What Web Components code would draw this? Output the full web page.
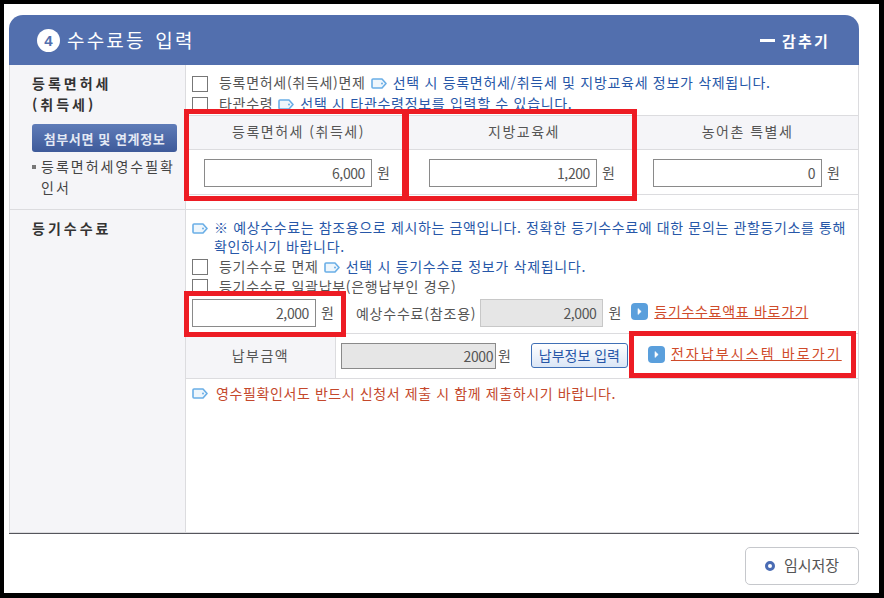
<!DOCTYPE html>
<html lang="ko">
<head>
<meta charset="utf-8">
<title>수수료등 입력</title>
<style>
  html, body { margin: 0; padding: 0; background: #000; }
  body { width: 884px; height: 598px; overflow: hidden; font-family: "Noto Sans CJK KR", "Liberation Sans", sans-serif; }
</style>
</head>
<body>
<fee-form>
  <fee-section slot="a" label="등록면허세<br>(취득세)" height="145" pad="8">
    <div slot="side">
      <side-button>첨부서면 및 연계정보</side-button>
      <side-note>등록면허세영수필확인서</side-note>
    </div>
    <div style="height:8px"></div>
    <check-line h="21" label="등록면허세(취득세)면제" note="선택 시 등록면허세/취득세 및 지방교육세 정보가 삭제됩니다."></check-line>
    <check-line h="21" label="타관수령" note="선택 시 타관수령정보를 입력할 수 있습니다."></check-line>
    <tax-table></tax-table>
  </fee-section>
  <fee-section slot="b" label="등기수수료" height="323" pad="8">
    <reg-fee></reg-fee>
  </fee-section>
</fee-form>

<script>
const TEXT = '"Noto Sans CJK KR", "Liberation Sans", sans-serif';

const tagIcon = `<svg width="16" height="11" viewBox="0 0 16 11" style="flex:none;display:block"><path d="M2 1H11L15 5.5L11 10H2Q1 10 1 9V2Q1 1 2 1Z" fill="#eef6fc" stroke="#6aaee6" stroke-width="1.6" stroke-linejoin="round"/><circle cx="11" cy="5.5" r="1" fill="#6aaee6"/></svg>`;
const goIcon = `<svg width="17" height="17" viewBox="0 0 17 17" style="flex:none;display:block"><rect width="17" height="17" rx="4" fill="#5a9fdc"/><path d="M7 5.5L10.2 8.5L7 11.5Z" fill="#fff" stroke="#fff" stroke-width=".6" stroke-linejoin="round"/></svg>`;

class FeeForm extends HTMLElement {
  connectedCallback() {
    this.attachShadow({ mode: 'open' });
    this.shadowRoot.innerHTML = `
      <style>
        :host { display: block; position: relative; box-sizing: border-box; width: 875px; height: 589px; margin: 4px 0 0 4px; background: #fff; padding: 11px 20px 0 5px; font-family: ${TEXT}; }
        .head { height: 50px; background: #526fae; border-radius: 14px 14px 0 0; display: flex; align-items: center; padding: 0 29px 0 28px; color: #fff; }
        .num { width: 23px; height: 23px; border-radius: 50%; background: #fff; color: #526fae; font: bold 15px "Liberation Sans", sans-serif; display: flex; align-items: center; justify-content: center; }
        .title { font-size: 19px; letter-spacing: 2.2px; word-spacing: 2px; margin: 0 0 2px 7px; flex: 1; }
        .hide { display: flex; align-items: center; font-size: 15px; font-weight: 700; letter-spacing: 2.2px; }
        .hide i { width: 15px; height: 3px; background: #fff; margin-right: 7px; }
        .body { height: 469px; border-bottom: 1px solid #55565c; box-sizing: border-box; }
        .foot { display: flex; justify-content: flex-end; padding-top: 13px; }
        .save { box-sizing: border-box; width: 114px; height: 38px; padding-bottom: 3px; border: 1px solid #c6c8cc; border-radius: 5px; background: #fff; display: flex; align-items: center; justify-content: center; font-size: 15px; color: #555; }
        .save i { width: 4px; height: 4px; border: 3px solid #4a6cb4; border-radius: 50%; margin: 2px 9px 0 0; background: #fff; }
      </style>
      <div class="head">
        <span class="num">4</span><span class="title">수수료등 입력</span>
        <span class="hide"><i></i>감추기</span>
      </div>
      <div class="body"><slot name="a"></slot><slot name="b"></slot></div>
      <div class="foot"><div class="save"><i></i>임시저장</div></div>
      <red-box style="left:180px;top:105px;width:223px;height:92px"></red-box>
      <red-box style="left:400px;top:105px;width:233px;height:92px"></red-box>
      <red-box style="left:180px;top:287px;width:162px;height:46px"></red-box>
      <red-box style="left:625px;top:327px;width:227px;height:47px"></red-box>
    `;
  }
}

class RedBox extends HTMLElement {
  connectedCallback() {
    this.attachShadow({ mode: 'open' });
    this.shadowRoot.innerHTML = `<style>:host { position: absolute; box-sizing: border-box; border: 5px solid #ed1c24; }</style>`;
  }
}

class FeeSection extends HTMLElement {
  connectedCallback() {
    this.attachShadow({ mode: 'open' });
    this.shadowRoot.innerHTML = `
      <style>
        :host { display: flex; box-sizing: border-box; height: ${this.getAttribute('height')}px; border-bottom: 1px solid #dcdcdf; border-left: 1px solid #dcdcdf; border-right: 1px solid #dcdcdf; }
        .side { box-sizing: border-box; width: 176px; flex: none; background: #f5f5f8; border-right: 1px solid #dcdcdf; padding: ${this.getAttribute('pad')}px 0 0 22px; }
        .label { font-size: 14px; font-weight: 700; line-height: 21px; color: #333; letter-spacing: 3px; }
        .main { flex: 1; min-width: 0; }
      </style>
      <div class="side"><div class="label">${this.getAttribute('label')}</div><slot name="side"></slot></div>
      <div class="main"><slot></slot></div>
    `;
  }
}

class SideButton extends HTMLElement {
  connectedCallback() {
    this.attachShadow({ mode: 'open' });
    this.shadowRoot.innerHTML = `
      <style>:host { display: flex; align-items: center; justify-content: center; box-sizing: border-box; width: 145px; height: 28px; margin-top: 9px; border-radius: 3px; background: linear-gradient(#5f7cb8, #3e5a9a); color: #e4e9f4; font-size: 13px; font-weight: 700; letter-spacing: .6px; }</style><slot></slot>`;
  }
}

class SideNote extends HTMLElement {
  connectedCallback() {
    this.attachShadow({ mode: 'open' });
    this.shadowRoot.innerHTML = `
      <style>
        :host { display: flex; width: 150px; margin-top: 4px; font-size: 14px; line-height: 21px; color: #444; letter-spacing: 2px; }
        i { flex: none; width: 4px; height: 4px; background: #777; margin: 9px 5px 0 0; }
        span { width: 140px; }
      </style><i></i><span><slot></slot></span>`;
  }
}

class CheckLine extends HTMLElement {
  connectedCallback() {
    this.attachShadow({ mode: 'open' });
    this.shadowRoot.innerHTML = `
      <style>
        :host { display: flex; align-items: center; height: ${this.getAttribute('h') || 20}px; padding-left: 6px; font-size: 14px; color: #555; white-space: nowrap; overflow: hidden; letter-spacing: .7px; }
        .box { box-sizing: border-box; width: 16px; height: 16px; border: 1px solid #777; margin-right: 11px; flex: none; background: #fff; }
        .t { margin-bottom: 3px; }
        .note { color: #2757a8; margin-left: 6px; }
        .tag { margin-left: 5px; }
      </style>
      <span class="box"></span><span class="t">${this.getAttribute('label')}</span>
      ${this.getAttribute('note') ? `<span class="tag">${tagIcon}</span><span class="t note">${this.getAttribute('note')}</span>` : ''}
    `;
  }
}

class MoneyField extends HTMLElement {
  connectedCallback() {
    this.attachShadow({ mode: 'open' });
    const grey = this.hasAttribute('grey');
    const dark = this.hasAttribute('dark');
    const h = this.getAttribute('h') || 28;
    const pad = this.getAttribute('pad') || 6;
    this.shadowRoot.innerHTML = `
      <style>
        :host { display: flex; align-items: center; font-size: 14px; color: #555; }
        .f { box-sizing: border-box; height: ${h}px; width: ${this.getAttribute('width')}px; border: 1px solid ${grey && !dark ? '#c8c8c8' : '#8a8a8a'}; background: ${grey ? '#e6e6e6' : '#fff'}; line-height: ${h - 2}px; padding-right: ${pad}px; text-align: right; letter-spacing: -.4px; }
        .u { margin: 0 0 2px ${this.getAttribute('gap') || 5}px; }
      </style>
      <div class="f">${this.getAttribute('value')}</div><span class="u">원</span>
    `;
  }
}

class TaxTable extends HTMLElement {
  connectedCallback() {
    this.attachShadow({ mode: 'open' });
    const col = (name, value, w, pad) => `
      <div class="c"><div class="th">${name}</div><div class="td" style="padding-left:${pad}px"><money-field width="${w}" value="${value}"></money-field></div></div>`;
    this.shadowRoot.innerHTML = `
      <style>
        :host { display: grid; grid-template-columns: 225px 226px 1fr; font-size: 14px; color: #555; border-top: 1px solid #dcdcdf; border-bottom: 1px solid #dcdcdf; }
        .th { box-sizing: border-box; height: 34px; padding-bottom: 3px; background: #f5f5f8; border-bottom: 1px solid #dcdcdf; display: flex; align-items: center; justify-content: center; letter-spacing: 1.5px; }
        .td { box-sizing: border-box; height: 44px; padding-top: 2px; display: flex; align-items: center; }
      </style>
      ${col('등록면허세 (취득세)', '6,000', 168, 18)}
      ${col('지방교육세', '1,200', 168, 18)}
      ${col('농어촌 특별세', '0', 169, 16)}
    `;
  }
}

class RegFee extends HTMLElement {
  connectedCallback() {
    this.attachShadow({ mode: 'open' });
    this.shadowRoot.innerHTML = `
      <style>
        :host { display: block; font-size: 14px; color: #555; }
        .notice { display: flex; padding: 8px 0 0 6px; margin-bottom: 1px; color: #2757a8; line-height: 19px; letter-spacing: .63px; white-space: nowrap; }
        .notice svg { margin: 5px 6px 0 0; }
        .row { display: flex; align-items: center; box-sizing: border-box; height: 36px; padding: 0 0 4px 6px; white-space: nowrap; }
        .pay { display: flex; align-items: center; box-sizing: border-box; height: 46px; border-top: 1px solid #dcdcdf; border-bottom: 1px solid #dcdcdf; white-space: nowrap; }
        .pay .lab { box-sizing: border-box; width: 150px; height: 100%; padding-bottom: 3px; background: #f5f5f8; display: flex; align-items: center; justify-content: center; border-right: 1px solid #dcdcdf; letter-spacing: 1.5px; }
        a { color: #cf4a2a; text-decoration: underline; }
        .go { display: flex; align-items: center; }
        .btn { box-sizing: border-box; width: 97px; height: 25px; padding-bottom: 2px; border: 1px solid #3f6fb5; border-radius: 3px; background: linear-gradient(#fff, #dbe6f6); color: #2757a8; display: flex; align-items: center; justify-content: center; font-size: 14px; }
        .red { display: flex; align-items: center; padding: 4px 0 0 6px; color: #c4482c; line-height: 20px; letter-spacing: .6px; white-space: nowrap; }
        .red svg { margin-right: 8px; }
      </style>
      <div class="notice">${tagIcon}<span>※ 예상수수료는 참조용으로 제시하는 금액입니다. 정확한 등기수수료에 대한 문의는 관할등기소를 통해<br>확인하시기 바랍니다.</span></div>
      <check-line label="등기수수료 면제" note="선택 시 등기수수료 정보가 삭제됩니다."></check-line>
      <check-line label="등기수수료 일괄납부(은행납부인 경우)"></check-line>
      <div class="row">
        <money-field width="124" value="2,000"></money-field>
        <span style="margin:0 0 1px 22px;letter-spacing:.8px">예상수수료(참조용)</span>
        <money-field grey width="123" value="2,000" style="margin-left:4px"></money-field>
        <span class="go" style="margin:0 0 3px 10px;gap:6px">${goIcon}<a style="letter-spacing:.7px;margin-bottom:2px">등기수수료액표 바로가기</a></span>
      </div>
      <div class="pay">
        <div class="lab">납부금액</div>
        <money-field grey dark h="26" pad="2" gap="2" width="155" value="2000" style="margin:0 0 1px 5px"></money-field>
        <div class="btn" style="margin:0 0 1px 20px">납부정보 입력</div>
        <span class="go" style="margin:0 0 4px 20px;gap:6px">${goIcon}<a style="letter-spacing:2.1px;margin-bottom:2px">전자납부시스템 바로가기</a></span>
      </div>
      <div class="red">${tagIcon}<span>영수필확인서도 반드시 신청서 제출 시 함께 제출하시기 바랍니다.</span></div>
    `;
  }
}

customElements.define('red-box', RedBox);
customElements.define('money-field', MoneyField);
customElements.define('check-line', CheckLine);
customElements.define('side-button', SideButton);
customElements.define('side-note', SideNote);
customElements.define('tax-table', TaxTable);
customElements.define('reg-fee', RegFee);
customElements.define('fee-section', FeeSection);
customElements.define('fee-form', FeeForm);
</script>
</body>
</html>
